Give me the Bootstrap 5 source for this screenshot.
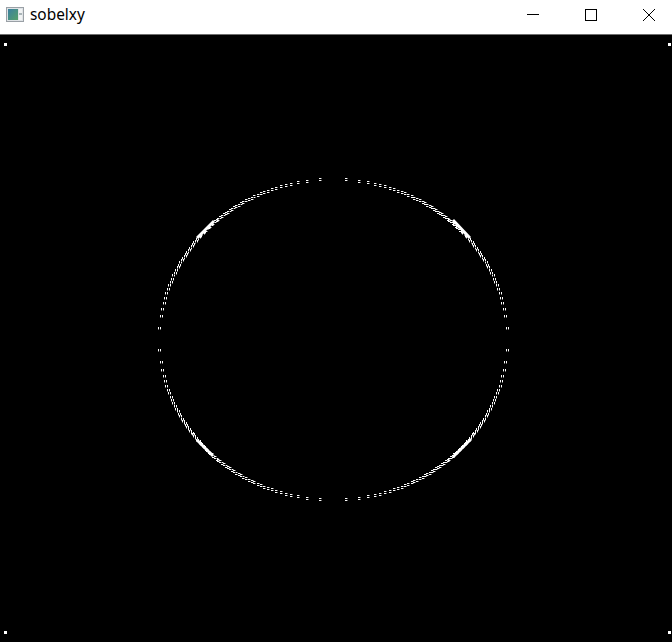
<!DOCTYPE html>
<html lang="en">
<head>
<meta charset="utf-8">
<title>sobelxy</title>
<link href="https://cdn.jsdelivr.net/npm/bootstrap@5.3.0/dist/css/bootstrap.min.css" rel="stylesheet">
<style>
html, body { margin: 0; height: 642px; overflow: hidden; background: #000; }
.win-frame { width: 672px; height: 642px; }
.win-bar { height: 35px; padding-bottom: 4px; background: #fff; border-bottom: 1px solid #6e6e6e; }
.win-title { font-family: "Noto Sans", "Liberation Sans", sans-serif; font-size: 15.4px; line-height: 1; color: #000; margin-left: 6px; }
.win-logo { margin-left: 6px; margin-bottom: 1px; display: block; }
.win-ctls { gap: 12px; }
.win-ctl { width: 46px; height: 30px; }
.win-view { display: block; background: #000; }
</style>
</head>
<body>
<div class="win-frame d-flex flex-column">
  <div class="win-bar d-flex align-items-center flex-shrink-0">
    <svg class="win-logo" width="18" height="15" viewBox="0 0 18 15" aria-hidden="true">
      <defs><linearGradient id="lg" x1="0" y1="0" x2="1" y2="1"><stop offset="0" stop-color="#3a7fa0"/><stop offset="1" stop-color="#55a06a"/></linearGradient></defs>
      <rect x="0.5" y="0.5" width="17" height="14" fill="#dfe3e6" stroke="#9aa0a6"/>
      <rect x="2" y="2" width="10" height="11" fill="url(#lg)"/>
      <rect x="13" y="2" width="3" height="11" fill="#f1f3f4"/>
      <rect x="13" y="6" width="3" height="2" fill="#a9b4b8"/>
    </svg>
    <span class="win-title">sobelxy</span>
    <div class="ms-auto d-flex win-ctls">
      <div class="win-ctl d-flex align-items-center justify-content-center">
        <svg width="12" height="12" viewBox="0 0 12 12" aria-hidden="true"><path d="M0 5.5H12" stroke="#000" fill="none"/></svg>
      </div>
      <div class="win-ctl d-flex align-items-center justify-content-center">
        <svg width="12" height="12" viewBox="0 0 12 12" aria-hidden="true"><rect x="0.5" y="0.5" width="11" height="11" stroke="#000" fill="none"/></svg>
      </div>
      <div class="win-ctl d-flex align-items-center justify-content-center">
        <svg width="12" height="12" viewBox="0 0 12 12" aria-hidden="true"><path d="M0 0L12 12M12 0L0 12" stroke="#000" fill="none"/></svg>
      </div>
    </div>
  </div>
  <svg id="edges" class="win-view flex-grow-1" width="672" height="607" viewBox="0 35 672 607" aria-hidden="true"></svg>
</div>
<script>
(function () {
  var svg = document.getElementById('edges');
  var cx = 333, cy = 339.3, a = 174, b = 160.3;
  var out = '';
  function px(x, y, w, h, c) {
    out += '<rect x="' + x + '" y="' + y + '" width="' + w + '" height="' + h + '" fill="' + c + '" shape-rendering="crispEdges"/>';
  }
  [[4, 43], [668, 43], [4, 631], [668, 631]].forEach(function (p) { px(p[0], p[1], 3, 3, '#fff'); });
  var h, d, x, y;
  var core = '#ffffff', halo = '#707070';
  function flat(x, y) {
    px(x - 1, y - 1, 3, 1, halo); px(x - 1, y - 1, 2, 1, core);
    px(x - 1, y + 1, 3, 1, halo); px(x - 1, y + 1, 2, 1, core);
  }
  function steep(x, y) {
    px(x - 1, y - 1, 1, 3, halo); px(x - 1, y - 1, 1, 2, core);
    px(x + 1, y - 1, 1, 3, halo); px(x + 1, y - 1, 1, 2, core);
  }
  for (h = 159.85; h > 108; h -= 1.4) {
    d = a * Math.sqrt(1 - (h * h) / (b * b));
    [-1, 1].forEach(function (sx) {
      [-1, 1].forEach(function (sy) {
        flat(Math.round(cx + sx * d), Math.round(cy + sy * h));
      });
    });
  }
  for (d = 173.6; d > 128; d -= 1.4) {
    h = b * Math.sqrt(1 - (d * d) / (a * a));
    [-1, 1].forEach(function (sx) {
      [-1, 1].forEach(function (sy) {
        steep(Math.round(cx + sx * d), Math.round(cy + sy * h));
      });
    });
  }
  [[197, 238, 214, 221], [453, 220, 470, 238], [197, 440, 213, 456], [453, 457, 471, 439]].forEach(function (l) {
    out += '<line x1="' + l[0] + '" y1="' + l[1] + '" x2="' + l[2] + '" y2="' + l[3] + '" stroke="#fff" stroke-width="2.8"/>';
  });
  svg.innerHTML = out;
})();
</script>
<script src="https://cdn.jsdelivr.net/npm/bootstrap@5.3.0/dist/js/bootstrap.bundle.min.js"></script>
</body>
</html>
